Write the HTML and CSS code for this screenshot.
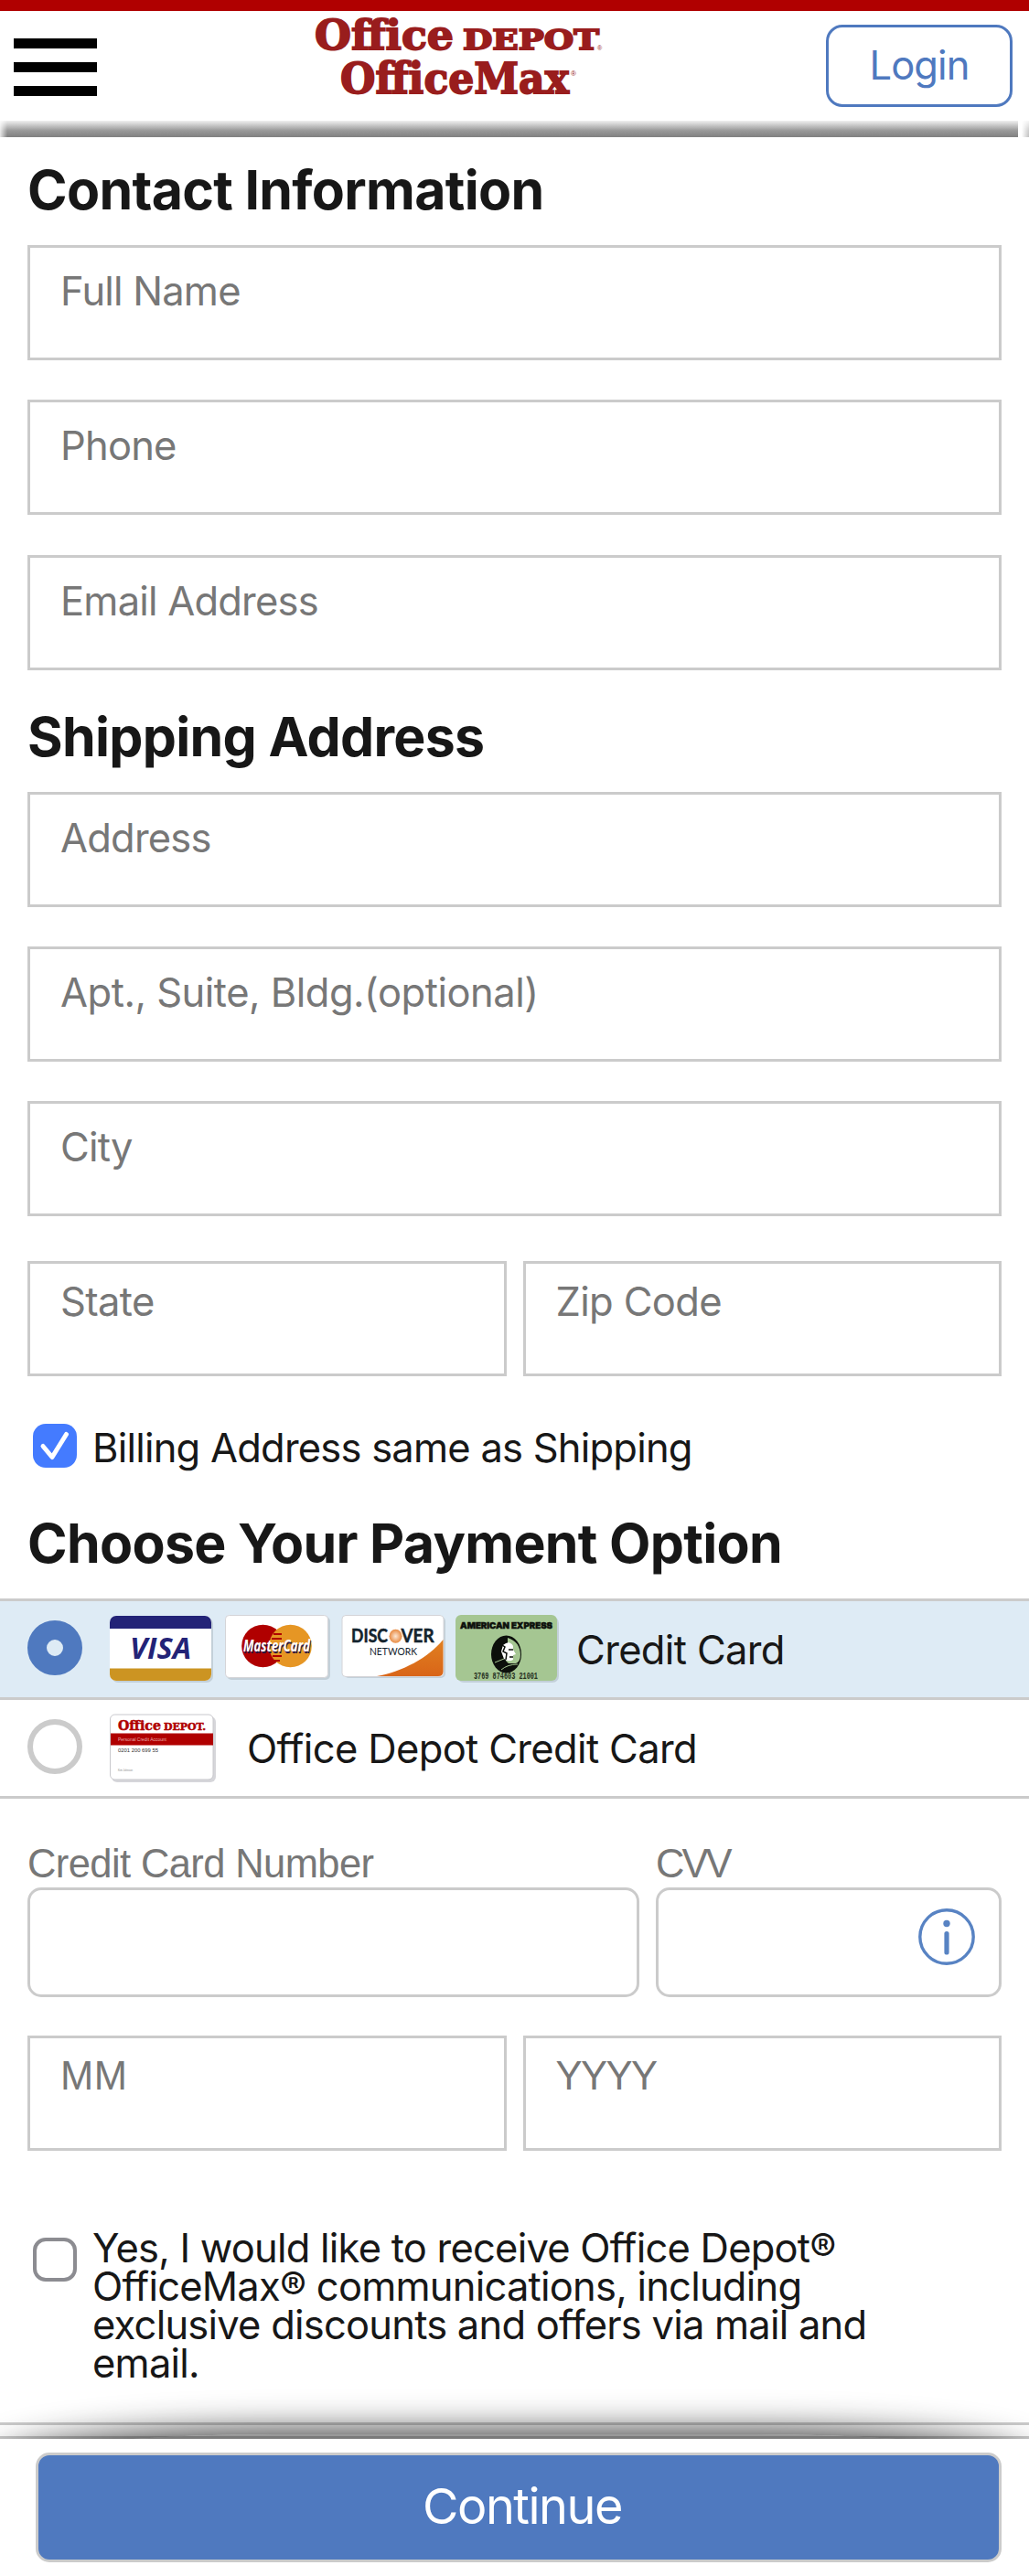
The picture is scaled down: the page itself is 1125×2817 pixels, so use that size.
FILE: index.html
```html
<!DOCTYPE html>
<html lang="en">
<head>
<meta charset="UTF-8">
<meta name="viewport" content="width=device-width, initial-scale=1.0">
<title>Checkout</title>
<link rel="stylesheet" href="styles.css">
</head>
<body>
    <header class="header">
        <button class="menuButton" aria-label="Menu">
            <span></span>
            <span></span>
            <span></span>
        </button>
        <svg class="logo" width="324" height="96" viewBox="340 16 324 96">
            <text class="logoText" x="344" y="54" font-size="44" textLength="152" lengthAdjust="spacingAndGlyphs">Office</text>
            <text class="logoText" x="506" y="54" font-size="30" textLength="149" lengthAdjust="spacingAndGlyphs">DEPOT</text>
            <text class="logoMark" x="653" y="55" font-size="7">®</text>
            <text class="logoText" x="372" y="102" font-size="46" textLength="250" lengthAdjust="spacingAndGlyphs">OfficeMax</text>
            <text class="logoMark" x="624" y="83" font-size="8">®</text>
        </svg>
        <button class="loginButton">Login</button>
    </header>
    <div class="headerShadow"></div>

    <main>
        <section class="section">
            <h2>Contact Information</h2>
            <div class="fields">
                <input class="field" type="text" placeholder="Full Name">
                <input class="field" type="text" placeholder="Phone">
                <input class="field" type="text" placeholder="Email Address">
            </div>
        </section>

        <section class="section shipping">
            <h2>Shipping Address</h2>
            <div class="fields">
                <input class="field" type="text" placeholder="Address">
                <input class="field apt" type="text" placeholder="Apt., Suite, Bldg.(optional)">
                <input class="field" type="text" placeholder="City">
            </div>
            <div class="fieldRow stateRow">
                <input class="field short" type="text" placeholder="State">
                <input class="field short" type="text" placeholder="Zip Code">
            </div>
            <label class="checkRow billing">
                <svg width="48" height="48" viewBox="0 0 48 48">
                    <rect width="48" height="48" rx="14" fill="#447bff"/>
                    <path d="M11 24.5 L21 36.5 L36.500 11.500" fill="none" stroke="#fff" stroke-width="5" stroke-linecap="round" stroke-linejoin="round"/>
                </svg>
                <span>Billing Address same as Shipping</span>
            </label>
        </section>

        <section class="payment">
            <h2>Choose Your Payment Option</h2>
            <div class="option selected">
                <span class="radio checked"></span>
                <svg class="cards" width="498" height="80" viewBox="120 1764 498 80">
                    <defs>
                        <linearGradient id="orange" x1="0" y1="0" x2="0" y2="1">
                            <stop offset="0" stop-color="#e08020"/>
                            <stop offset="1" stop-color="#d96518"/>
                        </linearGradient>
                        <radialGradient id="sun">
                            <stop offset="0" stop-color="#fbe6d4"/>
                            <stop offset="1" stop-color="#e88a40"/>
                        </radialGradient>
                        <clipPath id="visaClip"><rect x="120" y="1767" width="111" height="71" rx="7"/></clipPath>
                        <clipPath id="amexClip"><ellipse cx="553.500" cy="1809" rx="16" ry="20"/></clipPath>
                    </defs>
                    <!-- Visa -->
                    <rect x="122" y="1769" width="111" height="71" rx="7" fill="#c3d0d9"/>
                    <g clip-path="url(#visaClip)">
                        <rect x="120" y="1767" width="111" height="71" fill="#fff"/>
                        <rect x="120" y="1767" width="111" height="14" fill="#232377"/>
                        <rect x="120" y="1824.500" width="111" height="14" fill="#cc9422"/>
                    </g>
                    <text class="visaText" x="142" y="1813.500" font-size="31.500" textLength="67" lengthAdjust="spacingAndGlyphs">VISA</text>
                    <!-- MasterCard -->
                    <rect x="248" y="1768" width="113" height="69" rx="5" fill="#c3d0d9"/>
                    <rect x="246.500" y="1766.500" width="112" height="68" rx="4" fill="#fff" stroke="#d4d4d8"/>
                    <circle cx="287.500" cy="1800" r="23.300" fill="#b00000"/>
                    <circle cx="317.500" cy="1800" r="23.300" fill="#e69624"/>
                    <path d="M299 1787h9M297 1792h11M298 1811h10M298 1816h8" stroke="#b00000" stroke-width="2"/>
                    <text class="masterText" x="266" y="1806" font-size="17" textLength="73" lengthAdjust="spacingAndGlyphs">MasterCard</text>
                    <!-- Discover -->
                    <rect x="376" y="1768" width="111" height="67" rx="5" fill="#c3d0d9"/>
                    <rect x="374" y="1766.500" width="111" height="67" rx="4" fill="#fff" stroke="#d4d4d8"/>
                    <path d="M412 1833 C440 1828 468 1813 484.500 1793 V1828 Q484.500 1833 479 1833Z" fill="url(#orange)"/>
                    <text class="discoverText" x="384" y="1796" font-size="20" textLength="40" lengthAdjust="spacingAndGlyphs">DISC</text>
                    <ellipse cx="432.500" cy="1789.300" rx="7" ry="7.500" fill="url(#sun)"/>
                    <text class="discoverText" x="438.500" y="1796" font-size="20" textLength="36" lengthAdjust="spacingAndGlyphs">VER</text>
                    <text class="networkText" x="404" y="1809.500" font-size="12" textLength="52" lengthAdjust="spacingAndGlyphs">NETWORK</text>
                    <!-- American Express -->
                    <rect x="500" y="1768" width="111" height="72" rx="7" fill="#c3d0d9"/>
                    <rect x="498" y="1766" width="111" height="72" rx="6" fill="#a5c692"/>
                    <text class="amexText" x="503" y="1780.500" font-size="9.500" textLength="101" lengthAdjust="spacingAndGlyphs">AMERICAN EXPRESS</text>
                    <ellipse cx="553.500" cy="1809" rx="16.500" ry="20.500" fill="#0c0f0b"/>
                    <g clip-path="url(#amexClip)">
                        <path d="M555 1791 Q568 1795 569 1809 Q569 1817 564 1819 H556 Q550 1815 555 1810Z" fill="#a5c692"/>
                        <path d="M550 1799 Q557 1793 561 1800 L561 1804 L564 1809 L561 1810 L561 1815 Q556 1818 551 1814 L548 1806Z" fill="#fff"/>
                        <path d="M546 1797l6 4-2 5 4 2-1 7M556 1804h5M557 1812h4M541 1812l7 6M540 1808l5 8" fill="none" stroke="#0c0f0b" stroke-width="1.500"/>
                        <path d="M541 1818 L551 1814 M548 1826 Q555 1820 566 1820" fill="none" stroke="#a5c692" stroke-width="1"/>
                    </g>
                    <text class="amexNumber" x="518" y="1836" font-size="10" textLength="70" lengthAdjust="spacingAndGlyphs">3769 874603 21001</text>
                </svg>
                <span class="optionName">Credit Card</span>
            </div>
            <div class="option">
                <span class="radio"></span>
                <svg class="cards" width="119" height="80" viewBox="120 1872 119 80">
                    <rect x="122" y="1877" width="114" height="72" rx="6" fill="#d6d6da"/>
                    <rect x="120.500" y="1875" width="112.500" height="71" rx="5" fill="#fff" stroke="#c8c8cc"/>
                    <text class="depotText" x="129" y="1892" font-size="14" textLength="47" lengthAdjust="spacingAndGlyphs">Office</text>
                    <text class="depotText" x="179" y="1892" font-size="10.500" textLength="46" lengthAdjust="spacingAndGlyphs">DEPOT.</text>
                    <rect x="121" y="1895.500" width="112" height="13" fill="#b00000"/>
                    <text class="cardSmall" x="129" y="1904" font-size="6" textLength="53" lengthAdjust="spacingAndGlyphs" fill="#e8b0b0">Personal Credit Account</text>
                    <text class="cardSmall" x="129" y="1916" font-size="6" textLength="44" lengthAdjust="spacingAndGlyphs" fill="#333">0201 200 699 55</text>
                    <text class="cardSmall" x="129" y="1936.500" font-size="4" textLength="16" lengthAdjust="spacingAndGlyphs" fill="#888">Kim Johnson</text>
                </svg>
                <span class="optionName depot">Office Depot Credit Card</span>
            </div>
        </section>

        <section class="section cardForm">
            <div class="cardRow">
                <label class="cardLabel">Credit Card Number
                    <input class="roundField" type="text">
                </label>
                <label class="cardLabel cvv">CVV
                    <span class="roundField cvvField">
                        <svg width="60" height="60" viewBox="0 0 60 60">
                            <circle cx="30" cy="30" r="29.200" fill="none" stroke="#5883c3" stroke-width="3.400"/>
                            <circle cx="30" cy="15.500" r="3.700" fill="#5883c3"/>
                            <path d="M30 26.500V47" stroke="#5883c3" stroke-width="5.200" stroke-linecap="round"/>
                        </svg>
                    </span>
                </label>
            </div>
            <div class="fieldRow dateRow">
                <input class="field short month" type="text" placeholder="MM">
                <input class="field short year" type="text" placeholder="YYYY">
            </div>
            <label class="checkRow emails">
                <span class="checkbox"></span>
                <span>Yes, I would like to receive Office Depot®<br>OfficeMax® communications, including<br>exclusive discounts and offers via mail and<br>email.</span>
            </label>
        </section>
    </main>

    <footer class="footer">
        <div class="footerBar">
            <button class="continueButton">Continue</button>
        </div>
    </footer>
</body>
</html>
```

FILE: styles.css
```css
* {
    box-sizing: border-box;
}

body {
    margin: 0;
    background-color: #fff;
    color: #171717;
    font-family: Inter, "Liberation Sans", sans-serif;
    font-size: 43.5px;
    overflow: hidden;
}

button,
input {
    font-family: inherit;
    font-size: inherit;
    margin: 0;
}

h2 {
    margin: 0 0 28px;
    font-size: 59px;
    font-weight: 700;
    line-height: 64px;
    letter-spacing: -0.7px;
    white-space: nowrap;
}

/* Header */
.header {
    display: flex;
    align-items: flex-start;
    height: 132px;
    padding: 0 18px 0 15px;
    border-top: 12px solid #b00000;
}

.menuButton {
    display: flex;
    flex-direction: column;
    justify-content: space-between;
    width: 91px;
    height: 63px;
    margin-top: 30px;
    padding: 0;
    border: none;
    background: none;
}

.menuButton span {
    height: 11px;
    background-color: #000;
}

.logo {
    margin: 4px 0 0 234px;
    overflow: visible;
}

.logoText {
    font-family: "DejaVu Serif", serif;
    font-weight: 700;
    fill: #991d1d;
    stroke: #991d1d;
    stroke-width: 1.8px;
}

.logoMark {
    font-family: "Liberation Sans", sans-serif;
    fill: #991d1d;
}

.loginButton {
    width: 204px;
    height: 90px;
    margin: 15px 0 0 auto;
    padding: 0 0 2px;
    border: 3px solid #4f79bf;
    border-radius: 18px;
    background-color: #fff;
    color: #4f79bf;
    letter-spacing: -0.9px;
}

.headerShadow {
    height: 18px;
    background:
        linear-gradient(to right, rgba(255, 255, 255, 0.8), rgba(255, 255, 255, 0) 8px),
        linear-gradient(to right, rgba(255, 255, 255, 0) 1113px, #fff 1113px, #fff 1117px, rgba(255, 255, 255, 0.5) 1125px),
        linear-gradient(#f0f0f0, #999 60%, #808080);
}

/* Form */
.section {
    padding: 26px 30px 0;
}

.section.shipping {
    padding-top: 41.2px;
}

.fields {
    display: flex;
    flex-direction: column;
    gap: 43.4px;
}

.shipping .fields {
    gap: 43px;
}

.field {
    width: 100%;
    height: 126px;
    padding: 0 33px 26px;
    border: 3px solid #cbcbcb;
    border-radius: 0;
    background-color: #fff;
    letter-spacing: -0.8px;
}

.field.apt {
    letter-spacing: -0.5px;
}

.field.short {
    flex: 1;
    width: 0;
    padding-bottom: 38px;
    letter-spacing: -0.65px;
}

.field.month,
.field.year {
    padding-bottom: 36px;
    font-family: "Liberation Sans", sans-serif;
    letter-spacing: 0.5px;
}

.field.year {
    letter-spacing: -1.5px;
}

.field::placeholder {
    color: #777;
    opacity: 1;
}

.fieldRow {
    display: flex;
    gap: 18px;
}

.stateRow {
    margin-top: 49px;
}

.checkRow {
    display: flex;
    gap: 17px;
    padding-left: 6px;
    line-height: 42px;
    letter-spacing: -0.78px;
    white-space: nowrap;
}

.billing {
    margin-top: 52px;
}

.billing span {
    margin-top: 5px;
}

/* Payment options */
.payment {
    padding-top: 51px;
}

.payment h2 {
    padding-left: 30px;
}

.option {
    display: flex;
    align-items: center;
    height: 108px;
    padding-left: 30px;
    border-top: 3px solid #cbcbcb;
}

.option:last-child {
    height: 111px;
    border-bottom: 3px solid #cbcbcb;
}

.selected {
    background-color: #deebf5;
}

.radio {
    width: 60px;
    height: 60px;
    margin-top: -3px;
    border: 6px solid #cbcbcb;
    border-radius: 50%;
}

.radio.checked {
    border: 21px solid #4f79bf;
}

.cards {
    margin: 1px 0 0 30px;
}

.optionName {
    margin: 2px 0 0 12px;
    letter-spacing: -0.65px;
}

.optionName.depot {
    margin-left: 31px;
}

.visaText {
    font-family: "Open Sans", sans-serif;
    font-weight: 700;
    font-style: italic;
    fill: #232377;
}

.masterText {
    font-family: "Open Sans", sans-serif;
    font-weight: 700;
    font-style: italic;
    fill: #fff;
    text-shadow: 1px 1.5px 0 #2b1640;
}

.discoverText {
    font-family: Lato, sans-serif;
    font-weight: 700;
    fill: #14242e;
    stroke: #14242e;
    stroke-width: 0.5px;
}

.networkText {
    font-family: Lato, sans-serif;
    fill: #14242e;
}

.amexText {
    font-family: Inter, sans-serif;
    font-weight: 900;
    fill: #0c0f0b;
    stroke: #0c0f0b;
    stroke-width: 0.5px;
}

.amexNumber {
    font-family: "Liberation Mono", monospace;
    font-weight: 700;
    fill: #26301f;
}

.depotText {
    font-family: "DejaVu Serif", serif;
    font-weight: 700;
    fill: #b00000;
    stroke: #b00000;
    stroke-width: 0.5px;
}

.cardSmall {
    font-family: "Liberation Sans", sans-serif;
}

/* Card details */
.section.cardForm {
    padding-top: 46px;
    padding-bottom: 44px;
    border-bottom: 3px solid #cbcbcb;
}

.cardRow {
    display: grid;
    grid-template-columns: 669px 378px;
    gap: 18px;
}

.cardLabel {
    color: #777;
    font-family: "Liberation Sans", sans-serif;
    line-height: 50px;
    letter-spacing: -0.6px;
}

.cardLabel.cvv {
    letter-spacing: -3px;
}

.roundField {
    display: block;
    width: 100%;
    height: 120px;
    margin-top: 1px;
    border: 3px solid #cbcbcb;
    border-radius: 15px;
    background-color: #fff;
}

.cvvField {
    display: flex;
    justify-content: flex-end;
    padding: 21px 27px;
}

.cvvField svg {
    overflow: visible;
}

.dateRow {
    margin-top: 42px;
}

.emails {
    margin-top: 85px;
}

.checkbox {
    width: 48px;
    height: 48px;
    margin-top: 10px;
    border: 4px solid #8c8c91;
    border-radius: 14px;
}

/* Continue bar */
.footer {
    position: fixed;
    left: 0;
    right: 0;
    bottom: 0;
    height: 153px;
    border-top: 3px solid #cbcbcb;
}

/* shadow that fades out towards both ends of the bar */
.footer::before {
    content: "";
    position: absolute;
    z-index: -1;
    top: -5px;
    left: 0;
    right: 0;
    height: 155px;
    border-radius: 300px / 36px;
    background-color: rgba(0, 0, 0, 0.4);
    box-shadow: 0 0 40px rgba(0, 0, 0, 0.9);
    clip-path: inset(-60px 0 0 0);
}

.footerBar {
    height: 150px;
    padding: 15px 30px 0 39px;
    background-color: #fff;
}

.continueButton {
    display: block;
    width: 100%;
    height: 120px;
    padding: 0 0 4px 8px;
    border: 3px solid #cbcbcb;
    border-radius: 15px;
    background-color: #4f79bf;
    color: #fff;
    font-size: 54px;
    letter-spacing: -1.5px;
}
```
